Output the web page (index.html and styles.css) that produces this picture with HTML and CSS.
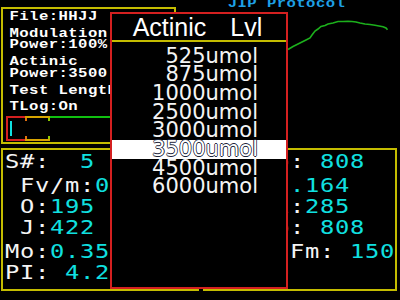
FILE: index.html
```html
<!DOCTYPE html>
<html lang="en">
<head>
    <meta charset="UTF-8">
    <title>JIP Protocol</title>
    <link rel="stylesheet" href="styles.css">
</head>
<body>
    <div class="screen">
        <div class="top">
            <section class="panel info">
                <p>File:HHJJ</p>
                <p>Modulation<br>Power:100%</p>
                <p>Actinic<br>Power:3500</p>
                <p>Test Length:10s</p>
                <p>TLog:On</p>
                <div class="bar">
                    <div class="seg low"><span class="cursor"></span></div>
                    <div class="seg mid"></div>
                    <div class="seg high"></div>
                </div>
            </section>
            <div class="side">
                <div class="caption">JIP Protocol</div>
                <div class="chart-row">
                    <div class="chart">
                        <svg width="105" height="128" viewBox="290 14 105 128">
                            <polyline points="290,51.5 295,48.5 299,46.5 303,44.5 308,42 312,40 314,37 317,33 320,31 323,28.5 327,27.5 330,26 335,25 340,23.5 345,23.5 350,23.3 354,23.5 358,24 362,25 367,26 372,26.5 377,27.3 381,28 385,28.7 388,30 389.5,31.7" fill="none" stroke="#1cb01c" stroke-width="1.6"/>
                        </svg>
                    </div>
                </div>
            </div>
        </div>
        <div class="bottom">
            <section class="panel stats">
                <div class="row"><span class="lbl">S#:  </span><span class="val">5</span></div>
                <div class="row gap"><span class="lbl"> Fv/m:</span><span class="val">0.79</span></div>
                <div class="row"><span class="lbl"> O:</span><span class="val">195</span></div>
                <div class="row"><span class="lbl"> J:</span><span class="val">422</span></div>
                <div class="row gap"><span class="lbl">Mo:</span><span class="val">0.35</span></div>
                <div class="row"><span class="lbl">PI: </span><span class="val">4.2</span></div>
            </section>
            <section class="panel stats right">
                <div class="row"><span class="lbl">   Fo: </span><span class="val">808</span></div>
                <div class="row gap"><span class="lbl"> Fs:</span><span class="val">3.164</span></div>
                <div class="row"><span class="lbl">   Fi:</span><span class="val">285</span></div>
                <div class="row"><span class="lbl">   Fp: </span><span class="val">808</span></div>
                <div class="row gap"><span class="lbl">     Fm: </span><span class="val">150</span></div>
                <div class="row"><span class="val">    0</span></div>
            </section>
        </div>

        <div class="menu">
            <div class="menu-title"><span>Actinic</span><span>Lvl</span></div>
            <ul class="menu-list">
                <li>525umol</li>
                <li>875umol</li>
                <li>1000umol</li>
                <li>2500umol</li>
                <li>3000umol</li>
                <li class="selected">3500umol</li>
                <li>4500umol</li>
                <li>6000umol</li>
            </ul>
        </div>
    </div>
</body>
</html>
```

FILE: styles.css
```css
body {
    margin: 0;
    background: #000;
}
.screen {
    position: relative;
    width: 400px;
    height: 300px;
    background: #000;
    overflow: hidden;
}
.panel {
    box-sizing: border-box;
    border: 2px solid #c4bc00;
}
.top {
    display: flex;
    height: 144px;
}
.info {
    width: 175px;
    height: 137px;
    margin: 7px 0 0 1px;
    padding-top: 3px;
    font-family: "Liberation Mono", monospace;
    font-weight: bold;
    font-size: 12.5px;
    letter-spacing: 0.34px;
    line-height: 11.7px;
    color: #fff;
    white-space: nowrap;
    overflow: hidden;
}
.info p {
    margin: 0 0 5px;
    padding-left: 6.5px;
    transform: scaleX(1.25);
    transform-origin: 6.5px 0;
}
.bar {
    display: flex;
    height: 25px;
    margin: -2.5px 0 0 3px;
}
.seg {
    box-sizing: border-box;
    height: 25px;
}
.low {
    width: 19px;
    border: 2px solid #d42020;
    border-right: 0;
}
.mid {
    width: 25px;
    border-top: 2px solid #d8a400;
    border-bottom: 2px solid #d8a400;
    background:
        linear-gradient(#e07010, #e07010) left top / 2px 3px no-repeat,
        linear-gradient(#e07010, #e07010) left bottom / 2px 3px no-repeat,
        linear-gradient(#8cc800, #8cc800) right top / 2px 3px no-repeat,
        linear-gradient(#8cc800, #8cc800) right bottom / 2px 3px no-repeat;
}
.high {
    flex: 1;
    border-top: 2px solid #10c010;
}
.cursor {
    display: block;
    width: 2px;
    height: 15px;
    margin: 3px 0 0 2px;
    background: #10e0e0;
}
.side {
    flex: 1;
    display: flex;
    flex-direction: column;
    padding-right: 3px;
}
.caption {
    height: 8px;
    line-height: 8px;
    text-align: center;
    font-family: "Liberation Mono", monospace;
    font-weight: bold;
    font-size: 12.5px;
    letter-spacing: 0.34px;
    color: #1ea0e6;
    transform: scaleX(1.25);
}
.chart-row {
    display: flex;
    justify-content: flex-end;
    margin-top: 4px;
}
.chart {
    width: 109px;
    height: 132px;
}
.chart svg {
    display: block;
}
.bottom {
    display: flex;
    height: 143px;
    margin-top: 4px;
}
.stats {
    width: 198px;
    margin-left: 1px;
    padding: 1px 0 0 2px;
    font-family: "DejaVu Sans Mono", monospace;
    font-size: 19px;
    letter-spacing: 0.56px;
    line-height: 21px;
    overflow: hidden;
}
.stats.right {
    flex: 1;
    width: auto;
    margin: 0 3px 0 4px;
    padding-left: 10px;
}
.row {
    white-space: pre;
    transform: scaleX(1.25);
    transform-origin: left;
}
.row.gap {
    margin-top: 3px;
}
.lbl {
    color: #f4f4f4;
}
.val {
    color: #10e0e0;
}
.menu {
    position: absolute;
    left: 110px;
    top: 12px;
    width: 178px;
    height: 277px;
    box-sizing: border-box;
    border: 2px solid #d42020;
    background: #000;
}
.menu-title {
    display: flex;
    justify-content: center;
    gap: 24px;
    height: 26px;
    line-height: 26px;
    padding-right: 3px;
    border-bottom: 2px solid #c4bc00;
    font-family: "Liberation Sans", Arial, sans-serif;
    font-size: 25px;
    color: #fff;
}
.menu-list {
    list-style: none;
    margin: 0;
    padding: 4.7px 0 0;
    font-family: "DejaVu Sans", sans-serif;
    font-size: 21px;
    line-height: 18.67px;
    color: #f4f4f4;
}
.menu-list li {
    text-align: right;
    padding-right: 28px;
}
.menu-list .selected {
    background: #fff;
    color: #fff;
    text-shadow: 0.8px 0 0 #1a2238, -0.8px 0 0 #1a2238, 0 0.8px 0 #1a2238, 0 -0.8px 0 #1a2238;
}
```
